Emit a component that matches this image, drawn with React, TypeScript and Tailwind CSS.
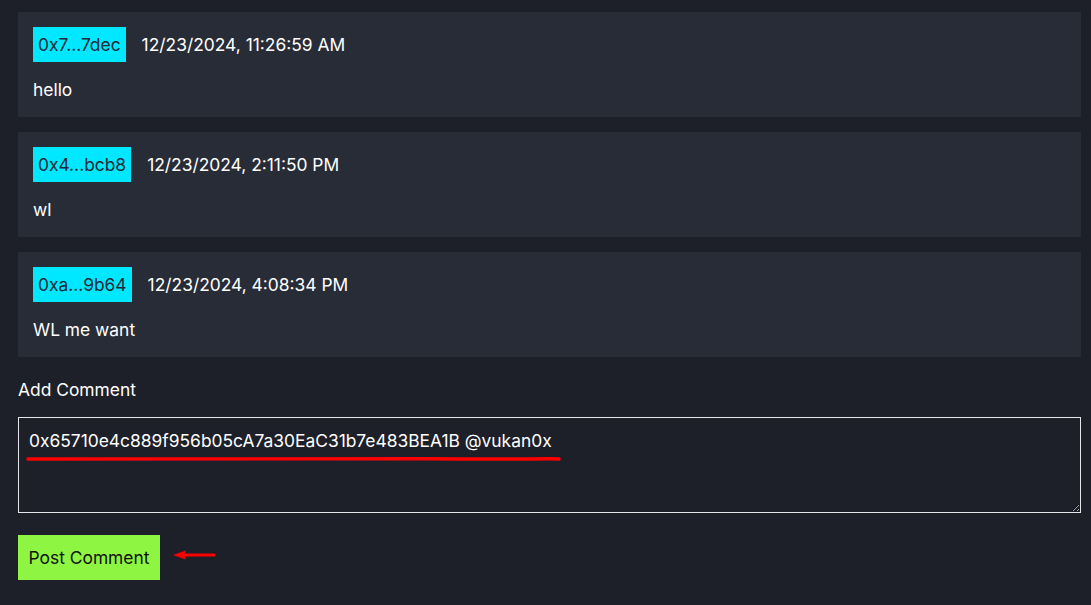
import React from "react"

type Comment = {
  addr: string
  time: string
  text: string
}

const comments: Comment[] = [
  { addr: "0x7...7dec", time: "12/23/2024, 11:26:59 AM", text: "hello" },
  { addr: "0x4...bcb8", time: "12/23/2024, 2:11:50 PM", text: "wl" },
  { addr: "0xa...9b64", time: "12/23/2024, 4:08:34 PM", text: "WL me want" },
]

function CommentCard(props: Comment) {
  return (
    <div className="bg-[#282c36] p-[15px] flex flex-col gap-4">
      <div className="flex items-center gap-4 h-[35px]">
        <span className="bg-[#00e8ff] text-[#1f2937] h-[35px] px-[5px] flex items-center">{props.addr}</span>
        <span className="text-white">{props.time}</span>
      </div>
      <p className="text-white leading-6">{props.text}</p>
    </div>
  )
}

export default function App() {
  return (
    <div
      className="min-h-[605px] bg-[#1e2029] pt-[12px] pl-[18px] pr-[10px] text-[17.4px] leading-6"
      style={{ fontFamily: "Inter, 'Noto Sans', sans-serif" }}
    >
      <div className="flex flex-col gap-[15px]">
        {comments.map((c) => (
          <CommentCard key={c.addr} {...c} />
        ))}
      </div>

      {/* Add comment */}
      <div className="mt-[21px] text-white">Add Comment</div>
      <div className="relative mt-[15px]">
        <textarea
          className="block w-full h-[96px] bg-[#1e2029] border border-[#e5e7eb] text-white text-[17.4px] leading-6 px-[10px] pt-[11px] outline-none"
          defaultValue="0x65710e4c889f956b05cA7a30EaC31b7e483BEA1B @vukan0x"
        />
        <svg className="absolute left-[8px] top-[38px] pointer-events-none" width="540" height="8">
          <path d="M2 4 C120 4.6 260 3 400 3.8 S520 3 533 4" stroke="#f00" strokeWidth="3.4" fill="none" strokeLinecap="round" />
        </svg>
      </div>

      <div className="mt-[22px] flex items-center gap-[12px]">
        <button className="bg-[#8ef542] text-[#111] text-[17.4px] h-[45px] w-[142px]">Post Comment</button>
        <svg width="44" height="12" viewBox="0 0 44 12" className="mt-[-6px]">
          <path d="M12 6 H42" stroke="#f00" strokeWidth="3" strokeLinecap="round" />
          <path d="M1 6 L14 1.5 L12 6 L14 10.5 Z" fill="#f00" />
        </svg>
      </div>
    </div>
  )
}
